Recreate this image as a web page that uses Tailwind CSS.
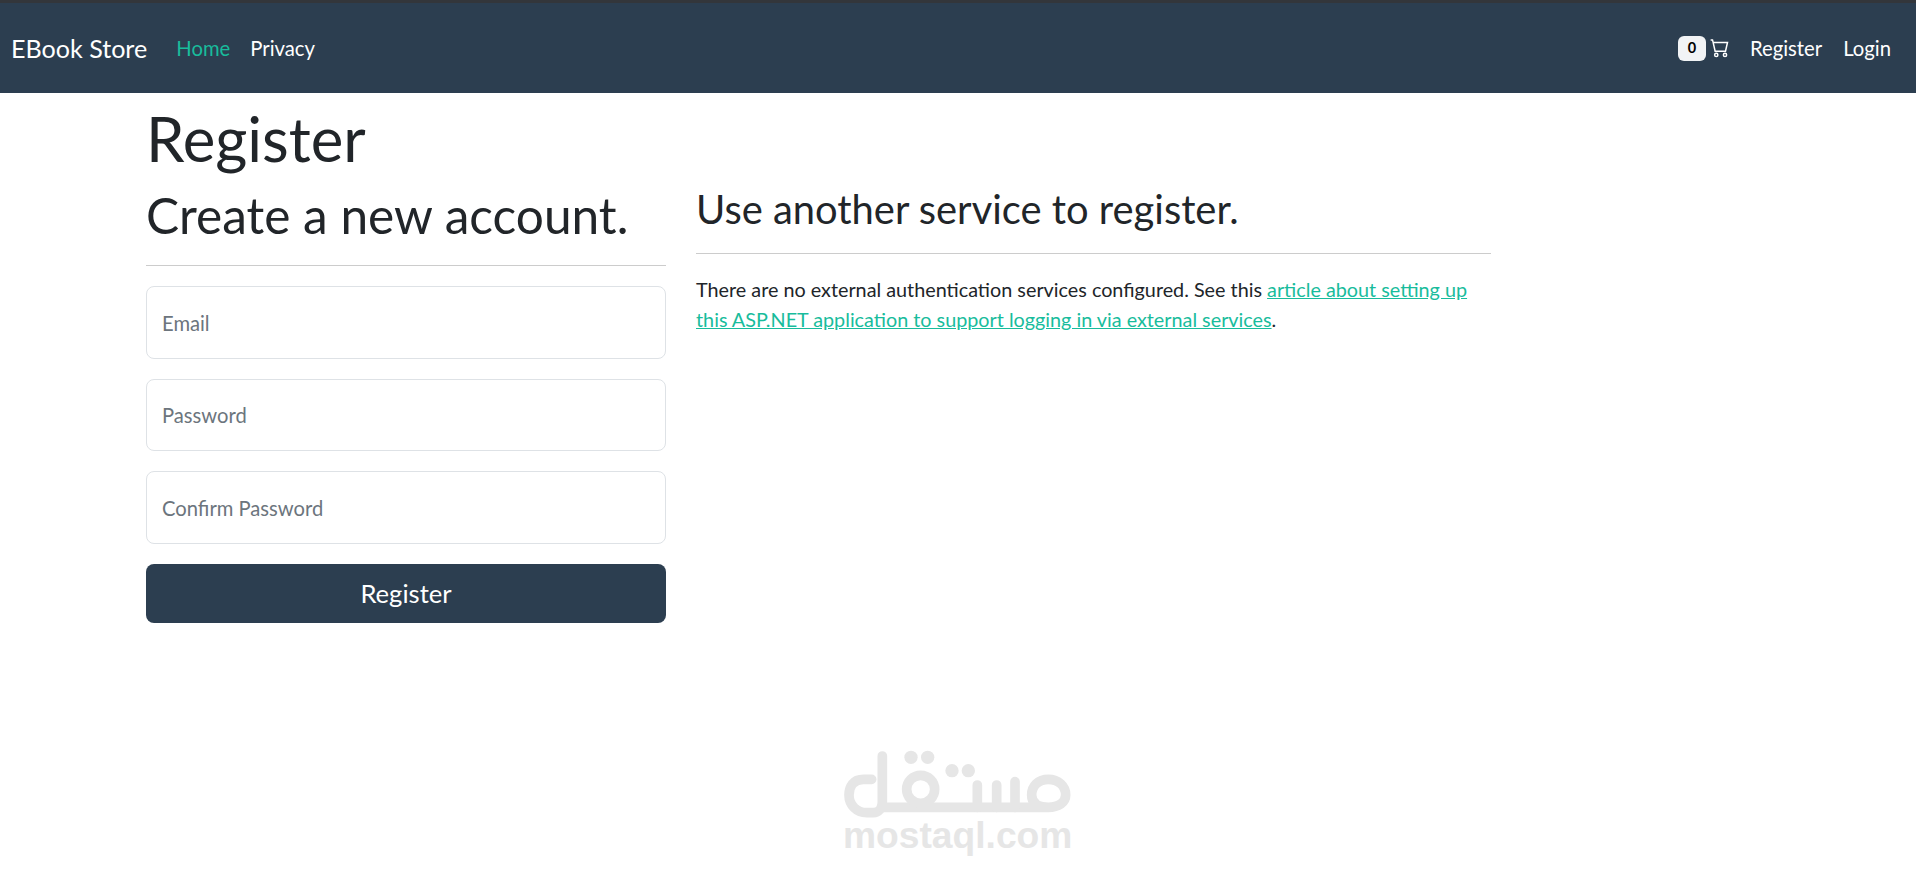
<!DOCTYPE html>
<html lang="en">
<head>
<meta charset="utf-8">
<title>Register</title>
<script src="https://cdn.jsdelivr.net/npm/@tailwindcss/browser@4"></script>
</head>
<body class="relative h-[873px] overflow-hidden bg-white font-['Lato','Noto_Sans',sans-serif] text-[19.8px] leading-[30px] text-[#212529]">
<nav class="flex h-[93px] items-center justify-between border-t-[3px] border-[#33363b] bg-[#2c3e50] pl-[11px] pr-3 text-[20.3px] text-white">
  <div class="flex items-center">
    <a class="mr-[29px] text-[25.1px] leading-[30px]">EBook Store</a>
    <a class="mr-[20px] text-[#18bc9c]">Home</a>
    <a>Privacy</a>
  </div>
  <div class="flex items-center">
    <span class="mt-[1px] flex h-[25px] w-[28px] items-center justify-center rounded-[6px] bg-[#f1f3f5] text-[14.5px] font-bold leading-none text-black">0</span>
    <svg class="ml-[4px] mr-[20px]" width="20" height="20" viewBox="0 0 16 16" fill="none" stroke="#fff" stroke-width="1.2"><path d="M.5 1.5H2l.5 2 1.6 7h8.3l1.6-7H2.6"/><circle cx="5" cy="13.5" r="1.3"/><circle cx="12" cy="13.5" r="1.3"/></svg>
    <a class="mr-[21px]">Register</a>
    <a class="mr-[13px]">Login</a>
  </div>
</nav>
<main class="pl-[146px]">
  <h1 class="pt-[10px] text-[61.7px] font-normal leading-[70px]">Register</h1>
  <div class="flex gap-[30px] pt-[12px]">
    <form class="w-[520px]">
      <h2 class="text-[49.6px] leading-[60px]">Create a new account.</h2>
      <hr class="mb-[20px] mt-[20px] border-0 border-t border-[#cccccc]">
      <div class="mb-[20px] flex h-[73px] items-center rounded-[8px] border border-[#dee2e6] px-[15px] text-[20.2px] text-[#6c757d]">Email</div>
      <div class="mb-[20px] flex h-[72px] items-center rounded-[8px] border border-[#dee2e6] px-[15px] text-[20.2px] text-[#6c757d]">Password</div>
      <div class="mb-[20px] flex h-[73px] items-center rounded-[8px] border border-[#dee2e6] px-[15px] text-[20.2px] text-[#6c757d]">Confirm Password</div>
      <button type="button" class="h-[59px] w-full rounded-[8px] bg-[#2c3e50] pb-[2px] text-[25.6px] text-white">Register</button>
    </form>
    <section class="w-[795px]">
      <h3 class="text-[39.9px] leading-[48px]">Use another service to register.</h3>
      <hr class="mb-[20px] mt-[20px] border-0 border-t border-[#cccccc]">
      <p>There are no external authentication services configured. See this <a class="text-[#18bc9c] underline">article about setting up this ASP.NET application to support logging in via external services</a>.</p>
    </section>
  </div>
</main>
<div class="absolute left-[800px] top-[720px] h-[153px] w-[300px]">
  <svg class="absolute inset-0" width="300" height="153" viewBox="0 0 900 459" fill="none" stroke="#e6e6e6" stroke-width="29" stroke-linecap="round" stroke-linejoin="round">
    <path d="M215 178H190C160 178 147 200 147 225C147 255 170 278 200 278H220C235 278 247 265 247 245V108"/>
    <path d="M247 262H745C775 262 797 248 797 225C797 198 775 178 745 178C715 178 695 198 695 225C695 248 710 262 745 262"/>
    <circle cx="362" cy="208" r="42"/>
    <path d="M532 195V262M590 195V262M645 185V262"/>
    <g fill="#e6e6e6" stroke="none"><circle cx="333" cy="112" r="20"/><circle cx="383" cy="112" r="20"/><circle cx="456" cy="152" r="20"/><circle cx="505" cy="152" r="20"/></g>
  </svg>
  <span class="absolute left-[43px] top-[93px] font-['Liberation_Sans',sans-serif] text-[37.2px] font-bold leading-[44px] text-[#e6e6e6]">mostaql.com</span>
</div>
</body>
</html>
